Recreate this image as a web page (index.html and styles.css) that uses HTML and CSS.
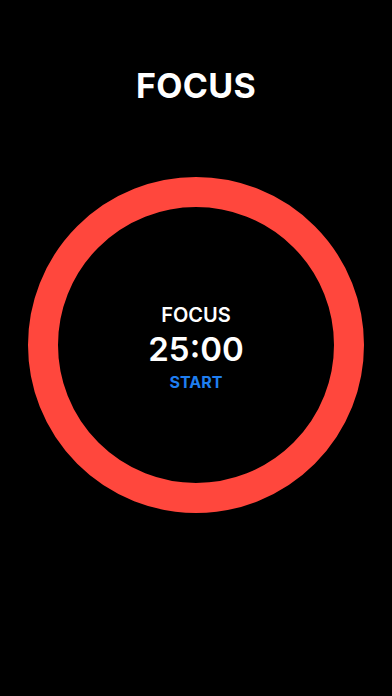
FILE: index.html
```html
<!DOCTYPE html>
<html>
<head>
<meta charset="utf-8">
<link rel="stylesheet" href="styles.css">
</head>
<body>
<main class="screen">
  <h1 class="title">FOCUS</h1>
  <div class="ring">
    <div class="mode">FOCUS</div>
    <div class="time">25:00</div>
    <div class="start">START</div>
  </div>
</main>
</body>
</html>
```
FILE: styles.css
```css
html, body {
  margin: 0;
  padding: 0;
  background: #000;
}
.screen {
  width: 392px;
  height: 696px;
  display: flex;
  flex-direction: column;
  align-items: center;
  font-family: Inter, "Noto Sans", sans-serif;
  color: #fff;
}
.title {
  margin: 64px 0 0 0;
  font-size: 34px;
  line-height: 44px;
  font-weight: 700;
  letter-spacing: 0.3px;
}
.ring {
  margin-top: 69px;
  width: 336px;
  height: 336px;
  box-sizing: border-box;
  border: 30px solid #ff473d;
  border-radius: 50%;
  padding-top: 4px;
  display: flex;
  flex-direction: column;
  align-items: center;
  justify-content: center;
}
.mode {
  font-size: 20px;
  line-height: 24px;
  font-weight: 600;
}
.time {
  font-size: 33px;
  line-height: 40px;
  font-weight: 600;
  margin-top: 2px;
}
.start {
  font-size: 16px;
  line-height: 20px;
  font-weight: 700;
  color: #1f7ef0;
  margin-top: 3px;
}
```
